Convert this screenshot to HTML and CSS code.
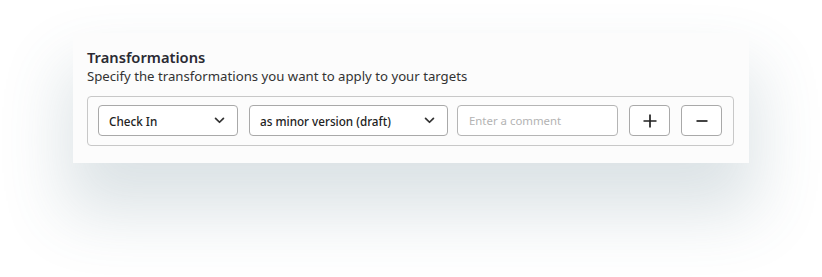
FILE: index.html
```html
<!DOCTYPE html>
<html lang="en">

<head>
    <meta charset="UTF-8">
    <meta name="viewport" content="width=device-width, initial-scale=1.0">
    <title>Transformations</title>
    <link rel="stylesheet" href="styles.css">
</head>

<body>
    <div class="card">
        <h3 class="title">Transformations</h3>
        <p class="subtitle">Specify the transformations you want to apply to your targets</p>

        <div class="row-box">
            <div class="select select-action">
                <span>Check In</span>
                <svg class="chevron" viewBox="0 0 12 8" width="11" height="7">
                    <path d="M1.5 1.5 L6 6 L10.5 1.5" fill="none" stroke="#333" stroke-width="2" stroke-linecap="round" stroke-linejoin="round" />
                </svg>
            </div>
            <div class="select select-mode">
                <span>as minor version (draft)</span>
                <svg class="chevron" viewBox="0 0 12 8" width="11" height="7">
                    <path d="M1.5 1.5 L6 6 L10.5 1.5" fill="none" stroke="#333" stroke-width="2" stroke-linecap="round" stroke-linejoin="round" />
                </svg>
            </div>
            <input class="comment" type="text" placeholder="Enter a comment" />
            <button class="icon-btn" title="Add">
                <svg viewBox="0 0 16 16" width="16" height="16">
                    <path d="M8 1.5 V14.5 M1.5 8 H14.5" stroke="#222" stroke-width="1.7" />
                </svg>
            </button>
            <button class="icon-btn" title="Remove">
                <svg viewBox="0 0 16 16" width="16" height="16">
                    <path d="M2.5 8 H13.5" stroke="#222" stroke-width="1.7" />
                </svg>
            </button>
        </div>
    </div>
</body>

</html>
```

FILE: styles.css
```css
html,
body {
    margin: 0;
    min-height: 100vh;
    background-color: #ffffff;
}

body {
    padding-top: 33px;
    box-sizing: border-box;
    font-family: 'Noto Sans', 'Open Sans', sans-serif;
    color: #333;
}

.card {
    width: 647px;
    margin-left: 73px;
    padding: 14px 15px 17px 14px;
    background-color: #fcfcfc;
    box-shadow: 0 42px 65px 8px rgba(70, 105, 120, 0.19);
}

.title {
    margin: 0;
    font-size: 14.7px;
    font-weight: 600;
    line-height: 20px;
    color: #2b2b33;
}

.subtitle {
    margin: 0 0 10px 0;
    font-size: 13.2px;
    line-height: 19px;
    color: #333;
}

.row-box {
    display: flex;
    align-items: center;
    padding: 8px 11px 9px 10px;
    border: 1px solid #c8c8c8;
    border-radius: 4px;
}

.select {
    box-sizing: border-box;
    height: 31px;
    display: flex;
    align-items: center;
    justify-content: space-between;
    padding: 0 12px 0 10px;
    border: 1px solid #a9a9a9;
    border-radius: 4px;
    background-color: #fff;
    font-size: 11.7px;
    font-weight: 500;
    color: #222;
}

.select-action {
    width: 140px;
    margin-right: 11px;
}

.select-mode {
    width: 199px;
    margin-right: 9px;
}

.comment {
    box-sizing: border-box;
    width: 161px;
    height: 31px;
    margin: 0 11px 0 0;
    padding: 0 11px;
    border: 1px solid #b5b5b5;
    border-radius: 4px;
    background-color: #fff;
    font-family: 'Noto Sans', 'Open Sans', sans-serif;
    font-size: 11.4px;
}

.comment::placeholder {
    color: #b3b3b3;
}

.icon-btn {
    box-sizing: border-box;
    width: 41px;
    height: 31px;
    margin: 0 11px 0 0;
    padding: 0;
    display: flex;
    align-items: center;
    justify-content: center;
    border: 1px solid #a9a9a9;
    border-radius: 4px;
    background-color: #fff;
    cursor: pointer;
}

.icon-btn:last-child {
    margin-right: 0;
}
```
